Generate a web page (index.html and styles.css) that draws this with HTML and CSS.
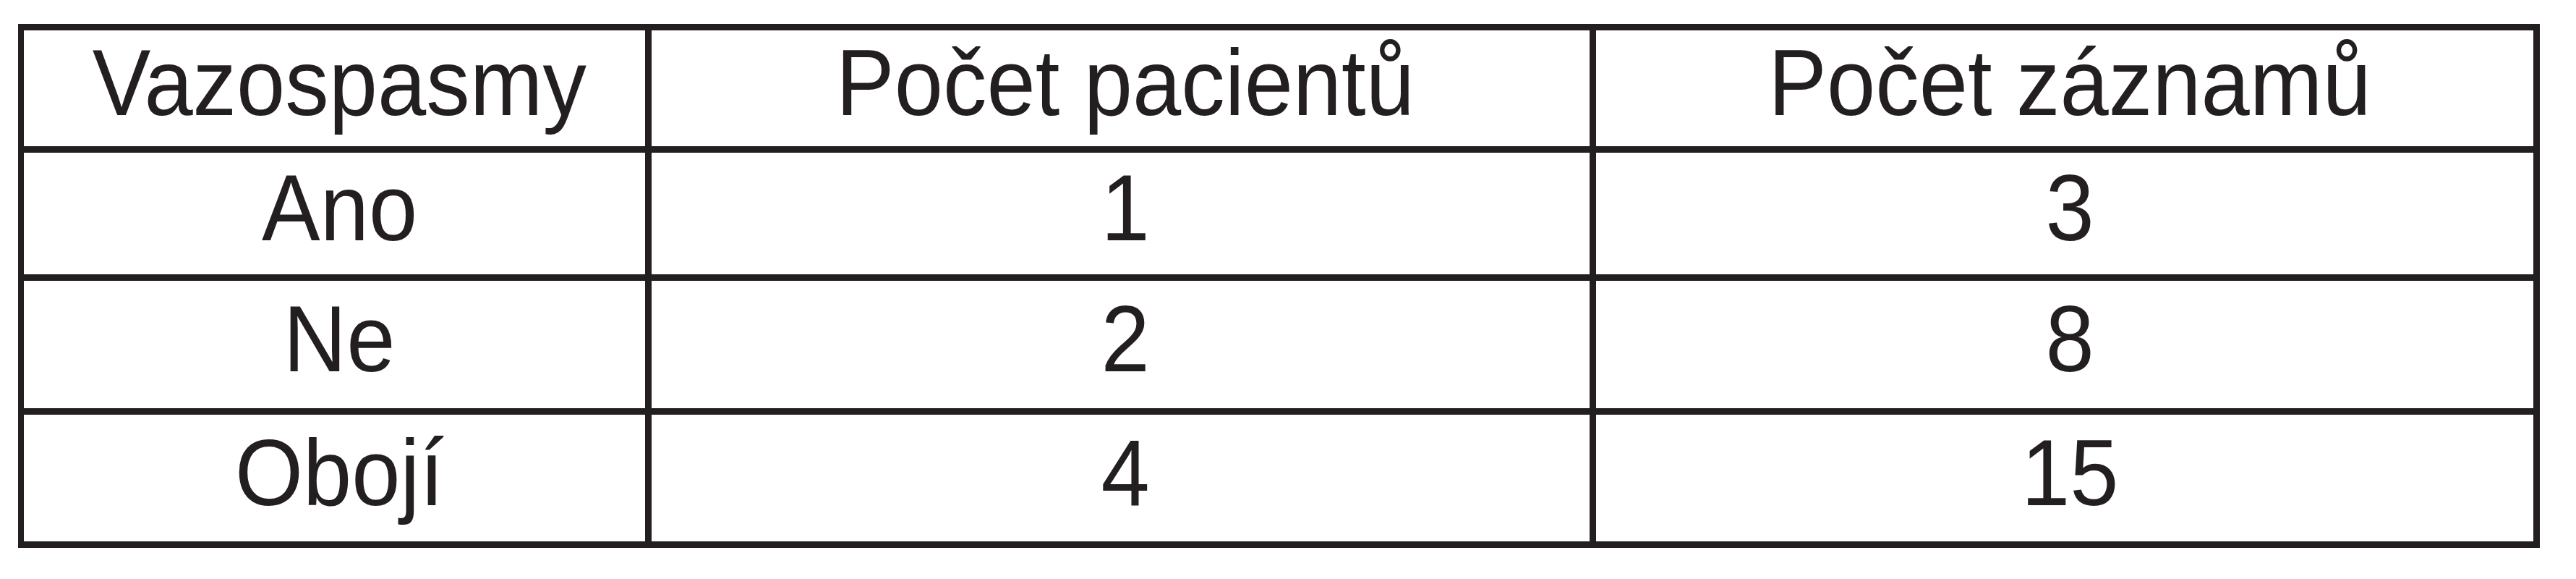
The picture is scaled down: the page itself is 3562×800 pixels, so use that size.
FILE: index.html
```html
<!DOCTYPE html>
<html lang="cs">
<head>
<meta charset="utf-8">
<title>Vazospasmy</title>
<link rel="stylesheet" href="styles.css">
</head>
<body>
<div class="table">
  <div class="cell head"><span class="txt">Vazospasmy</span></div>
  <div class="cell head"><span class="txt">Počet pacientů</span></div>
  <div class="cell head"><span class="txt">Počet záznamů</span></div>

  <div class="cell"><span class="txt">Ano</span></div>
  <div class="cell"><span class="txt">1</span></div>
  <div class="cell"><span class="txt">3</span></div>

  <div class="cell"><span class="txt">Ne</span></div>
  <div class="cell"><span class="txt">2</span></div>
  <div class="cell"><span class="txt">8</span></div>

  <div class="cell"><span class="txt">Obojí</span></div>
  <div class="cell"><span class="txt">4</span></div>
  <div class="cell"><span class="txt">15</span></div>
</div>
</body>
</html>
```
FILE: styles.css
```css
html, body {
  margin: 0;
  padding: 0;
  background: #ffffff;
}

body {
  font-family: "Liberation Sans", Arial, sans-serif;
  color: #231f20;
}

.table {
  margin: 33px 0 0 25px;
  width: 3487px;
  box-sizing: border-box;
  display: grid;
  grid-template-columns: 859px 1297px 1296px;
  grid-template-rows: 160px 168px 176px 175px;
  column-gap: 9px;
  row-gap: 9px;
  padding: 9px 9px 9px 8px;
  background: #231f20;
}

.cell {
  background: #ffffff;
  display: flex;
  align-items: center;
  justify-content: center;
  padding: 0 0 14px 14px;
  font-size: 130px;
  line-height: 1.15;
  white-space: nowrap;
}

.txt {
  display: inline-block;
  transform: scaleX(0.93);
}
```
